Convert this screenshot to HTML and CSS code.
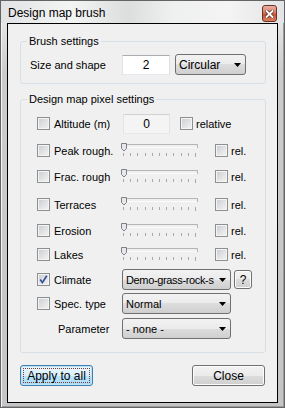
FILE: index.html
```html
<!DOCTYPE html>
<html lang="en">
<head>
    <meta charset="UTF-8">
    <title>Design map brush</title>
    <link rel="stylesheet" href="styles.css">
</head>
<body>

    <div class="window">
        <div class="titlebar">
            <span class="title">Design map brush</span>
            <span class="close-btn">
                <svg width="9" height="8" viewBox="0 0 9 8">
                    <path d="M1.5 1 L7.5 7 M7.5 1 L1.5 7" stroke="#5a3a34" stroke-width="3.4" stroke-linecap="square"/>
                    <path d="M1.5 1 L7.5 7 M7.5 1 L1.5 7" stroke="#fff" stroke-width="1.8" stroke-linecap="square"/>
                </svg>
            </span>
        </div>

        <div class="client">
            <fieldset class="group group-brush">
                <legend>Brush settings</legend>
                <div class="row">
                    <span class="cell cell-wide">Size and shape</span>
                    <span class="edit edit-size">2</span>
                    <span class="combo combo-shape">
                        <span class="combo-text">Circular</span>
                        <span class="combo-arrow"><svg width="7" height="4" viewBox="0 0 7 4"><polygon points="0,0 7,0 3.5,4" fill="#000"/></svg></span>
                    </span>
                </div>
            </fieldset>

            <fieldset class="group group-pixel">
                <legend>Design map pixel settings</legend>

                <div class="row">
                    <span class="cell"><span class="chk"></span><span class="lbl">Altitude (m)</span></span>
                    <span class="edit edit-alt">0</span>
                    <span class="chk chk-relative"></span><span class="lbl-rel">relative</span>
                </div>

                <div class="row row-peak">
                    <span class="cell"><span class="chk"></span><span class="lbl">Peak rough.</span></span>
                    <svg class="slider" width="77" height="15" viewBox="0 0 77 15">
                        <rect x="0.5" y="1.5" width="76" height="3" fill="#eef0f0" stroke="#b4b6b8"/>
                        <line x1="1" y1="4.5" x2="76" y2="4.5" stroke="#fbfbfb"/>
                        <path d="M0.5 0.5h5v5l-2.5 2.5l-2.5-2.5z" fill="#e6e8ea" stroke="#7d8185"/>
                        <path d="M2.5 10v3M9.5 10v3M16.5 10v3M24.5 10v3M31.5 10v3M38.5 10v3M45.5 10v3M52.5 10v3M60.5 10v3M67.5 10v3M74.5 10v4" stroke="#a6a8aa"/>
                    </svg>
                    <span class="chk chk-rel"></span><span class="lbl-rel">rel.</span>
                </div>

                <div class="row row-frac">
                    <span class="cell"><span class="chk"></span><span class="lbl">Frac. rough</span></span>
                    <svg class="slider" width="77" height="15" viewBox="0 0 77 15">
                        <rect x="0.5" y="1.5" width="76" height="3" fill="#eef0f0" stroke="#b4b6b8"/>
                        <line x1="1" y1="4.5" x2="76" y2="4.5" stroke="#fbfbfb"/>
                        <path d="M0.5 0.5h5v5l-2.5 2.5l-2.5-2.5z" fill="#e6e8ea" stroke="#7d8185"/>
                        <path d="M2.5 10v3M9.5 10v3M16.5 10v3M24.5 10v3M31.5 10v3M38.5 10v3M45.5 10v3M52.5 10v3M60.5 10v3M67.5 10v3M74.5 10v4" stroke="#a6a8aa"/>
                    </svg>
                    <span class="chk chk-rel"></span><span class="lbl-rel">rel.</span>
                </div>

                <div class="row row-terr">
                    <span class="cell"><span class="chk"></span><span class="lbl">Terraces</span></span>
                    <svg class="slider" width="77" height="15" viewBox="0 0 77 15">
                        <rect x="0.5" y="1.5" width="76" height="3" fill="#eef0f0" stroke="#b4b6b8"/>
                        <line x1="1" y1="4.5" x2="76" y2="4.5" stroke="#fbfbfb"/>
                        <path d="M0.5 0.5h5v5l-2.5 2.5l-2.5-2.5z" fill="#e6e8ea" stroke="#7d8185"/>
                        <path d="M2.5 10v3M9.5 10v3M16.5 10v3M24.5 10v3M31.5 10v3M38.5 10v3M45.5 10v3M52.5 10v3M60.5 10v3M67.5 10v3M74.5 10v4" stroke="#a6a8aa"/>
                    </svg>
                    <span class="chk chk-rel"></span><span class="lbl-rel">rel.</span>
                </div>

                <div class="row row-eros">
                    <span class="cell"><span class="chk"></span><span class="lbl">Erosion</span></span>
                    <svg class="slider" width="77" height="15" viewBox="0 0 77 15">
                        <rect x="0.5" y="1.5" width="76" height="3" fill="#eef0f0" stroke="#b4b6b8"/>
                        <line x1="1" y1="4.5" x2="76" y2="4.5" stroke="#fbfbfb"/>
                        <path d="M0.5 0.5h5v5l-2.5 2.5l-2.5-2.5z" fill="#e6e8ea" stroke="#7d8185"/>
                        <path d="M2.5 10v3M9.5 10v3M16.5 10v3M24.5 10v3M31.5 10v3M38.5 10v3M45.5 10v3M52.5 10v3M60.5 10v3M67.5 10v3M74.5 10v4" stroke="#a6a8aa"/>
                    </svg>
                    <span class="chk chk-rel"></span><span class="lbl-rel">rel.</span>
                </div>

                <div class="row row-lakes">
                    <span class="cell"><span class="chk"></span><span class="lbl">Lakes</span></span>
                    <svg class="slider" width="77" height="15" viewBox="0 0 77 15">
                        <rect x="0.5" y="1.5" width="76" height="3" fill="#eef0f0" stroke="#b4b6b8"/>
                        <line x1="1" y1="4.5" x2="76" y2="4.5" stroke="#fbfbfb"/>
                        <path d="M0.5 0.5h5v5l-2.5 2.5l-2.5-2.5z" fill="#e6e8ea" stroke="#7d8185"/>
                        <path d="M2.5 10v3M9.5 10v3M16.5 10v3M24.5 10v3M31.5 10v3M38.5 10v3M45.5 10v3M52.5 10v3M60.5 10v3M67.5 10v3M74.5 10v4" stroke="#a6a8aa"/>
                    </svg>
                    <span class="chk chk-rel"></span><span class="lbl-rel">rel.</span>
                </div>

                <div class="row row-climate">
                    <span class="cell">
                        <span class="chk">
                            <svg width="11" height="11" viewBox="0 0 11 11"><path d="M2.2 5.6 L4.4 8.6 L8.8 1.8" fill="none" stroke="#34519c" stroke-width="1.7"/></svg>
                        </span>
                        <span class="lbl">Climate</span>
                    </span>
                    <span class="combo combo-wide">
                        <span class="combo-text combo-tight">Demo-grass-rock-s</span>
                        <span class="combo-arrow"><svg width="7" height="4" viewBox="0 0 7 4"><polygon points="0,0 7,0 3.5,4" fill="#000"/></svg></span>
                    </span>
                    <button class="btn btn-help">?</button>
                </div>

                <div class="row row-spec">
                    <span class="cell"><span class="chk"></span><span class="lbl">Spec. type</span></span>
                    <span class="combo combo-wide">
                        <span class="combo-text">Normal</span>
                        <span class="combo-arrow"><svg width="7" height="4" viewBox="0 0 7 4"><polygon points="0,0 7,0 3.5,4" fill="#000"/></svg></span>
                    </span>
                </div>

                <div class="row row-param">
                    <span class="cell cell-param">Parameter</span>
                    <span class="combo combo-wide">
                        <span class="combo-text">- none -</span>
                        <span class="combo-arrow"><svg width="7" height="4" viewBox="0 0 7 4"><polygon points="0,0 7,0 3.5,4" fill="#000"/></svg></span>
                    </span>
                </div>
            </fieldset>

            <div class="buttons">
                <button class="btn btn-default"><span class="focus">Apply to all</span></button>
                <button class="btn">Close</button>
            </div>
        </div>
    </div>

</body>
</html>
```

FILE: styles.css
```css
body {
    margin: 0;
    font-family: "Liberation Sans", Arial, sans-serif;
    font-size: 11px;
    color: #000;
    background: #fff;
}
.window {
    width: 285px;
    height: 408px;
    box-sizing: border-box;
    border: 1px solid #646464;
    display: flex;
    flex-direction: column;
    background: linear-gradient(to bottom, #eceded 0, #e4e5e6 22px, #cbcccd 70px, #c4c5c6 100%);
    box-shadow: inset 1px 1px 0 #f4f4f4, inset -1px -1px 0 #9a9a9a;
}
.titlebar {
    height: 22px;
    flex-shrink: 0;
    display: flex;
    align-items: center;
    justify-content: space-between;
    padding: 0 7px;
    background: linear-gradient(to right, #e2e3e4 0%, #f3f4f4 25%, #dcdddd 45%, #eeefef 60%, #f4f4f4 80%, #e3e4e5 100%);
}
.title {
    font-size: 12px;
    line-height: 22px;
    margin-top: 2px;
}
.close-btn {
    width: 15px;
    height: 17px;
    box-sizing: border-box;
    margin-top: 3px;
    border: 1px solid #6f3124;
    border-radius: 3px;
    background: linear-gradient(to bottom, #eab1a3 0%, #d97a62 45%, #c5512f 55%, #d9805f 100%);
    display: flex;
    align-items: center;
    justify-content: center;
}
.client {
    flex: 1;
    margin: 0 6px 4px 6px;
    border: 1px solid #000;
    background: #f0f0f0;
}

/* group boxes */
.group {
    margin: 0 11px 0 12px;
    padding: 0 6px;
    border: 1px solid #d5dfe5;
    border-radius: 3px;
}
.group legend {
    padding: 0 2px;
    line-height: 14px;
}
.group-brush {
    margin-top: 10px;
    padding-top: 6px;
    padding-bottom: 8px;
}
.group-pixel {
    margin-top: 8px;
    padding-top: 7px;
    padding-bottom: 13px;
}
.row {
    display: flex;
    align-items: center;
    height: 21px;
}
.group-brush .row {
    padding-left: 3px;
}
.group-pixel .row {
    padding-left: 10px;
}
.row-peak { margin-top: 6px; }
.row-frac { margin-top: 5px; }
.row-terr { margin-top: 7px; }
.row-eros { margin-top: 5px; }
.row-lakes { margin-top: 3px; }
.row-climate { margin-top: 4px; }
.row-spec { margin-top: 3px; }
.row-param { margin-top: 4px; }

.cell {
    width: 85px;
    flex-shrink: 0;
    display: flex;
    align-items: center;
}
.cell-wide {
    width: 92px;
}
.cell-param {
    padding-left: 21px;
    box-sizing: border-box;
}
.lbl {
    margin-left: 4px;
}
.lbl-rel {
    margin-left: 3px;
}

/* checkboxes */
.chk {
    width: 13px;
    height: 13px;
    box-sizing: border-box;
    flex-shrink: 0;
    border: 1px solid #8e8f8f;
    background: linear-gradient(135deg, #c9ccd0 0%, #e4e5e7 60%, #f2f2f3 100%);
    box-shadow: inset 0 0 0 1px #f4f4f4;
    display: flex;
}
.chk-relative {
    margin-left: 10px;
}
.chk-rel {
    margin-left: 17px;
}

/* edit boxes */
.edit {
    height: 20px;
    box-sizing: border-box;
    border: 1px solid;
    border-color: #abadb3 #dbdfe6 #e3e9ef #e2e3ea;
    background: #fff;
    text-align: center;
    line-height: 18px;
    flex-shrink: 0;
}
.edit-size {
    width: 48px;
    font-size: 12px;
}
.edit-alt {
    width: 47px;
    margin-left: 1px;
    background: #f4f4f4;
    border-color: #cfd1d4 #e2e4e7 #e6e8eb #e2e4e7;
    font-size: 12px;
}

/* sliders */
.slider {
    margin-left: -1px;
    flex-shrink: 0;
    display: block;
}

/* combo boxes */
.combo {
    height: 21px;
    box-sizing: border-box;
    display: flex;
    align-items: center;
    padding-left: 3px;
    border: 1px solid #707070;
    border-radius: 3px;
    background: linear-gradient(to bottom, #f2f2f2 0%, #ebebeb 50%, #dddddd 50%, #cfcfcf 100%);
    flex-shrink: 0;
}
.combo-shape {
    width: 71px;
    margin-left: 5px;
    font-size: 12px;
}
.combo-wide {
    width: 109px;
}
.combo-text {
    flex: 1;
    overflow: hidden;
    white-space: nowrap;
}
.combo-tight {
    letter-spacing: -0.35px;
}
.combo-arrow {
    width: 15px;
    flex-shrink: 0;
    display: flex;
    justify-content: center;
}
.combo-arrow svg {
    display: block;
}

/* buttons */
.btn {
    font-family: inherit;
    font-size: 11px;
    color: #000;
    padding: 0;
    box-sizing: border-box;
    border: 1px solid #707070;
    border-radius: 3px;
    background: linear-gradient(to bottom, #f2f2f2 0%, #ebebeb 50%, #dddddd 50%, #cfcfcf 100%);
    box-shadow: inset 0 0 0 1px #fcfcfc;
}
.btn-help {
    width: 18px;
    height: 19px;
    margin-left: 3px;
    font-size: 12px;
}
.buttons {
    display: flex;
    justify-content: space-between;
    margin: 12px 12px 0 12px;
}
.buttons .btn {
    width: 73px;
    height: 21px;
    font-size: 12px;
}
.btn-default {
    border-color: #3c7fb1;
    background: linear-gradient(to bottom, #eaf6fd 0%, #d9f0fc 50%, #bee6fd 50%, #a7d9f5 100%);
    box-shadow: inset 0 0 0 1px #bfe3f6;
    padding: 2px;
}
.focus {
    display: flex;
    align-items: center;
    justify-content: center;
    height: 100%;
    box-sizing: border-box;
    border: 1px dotted #7a3a30;
}
```
